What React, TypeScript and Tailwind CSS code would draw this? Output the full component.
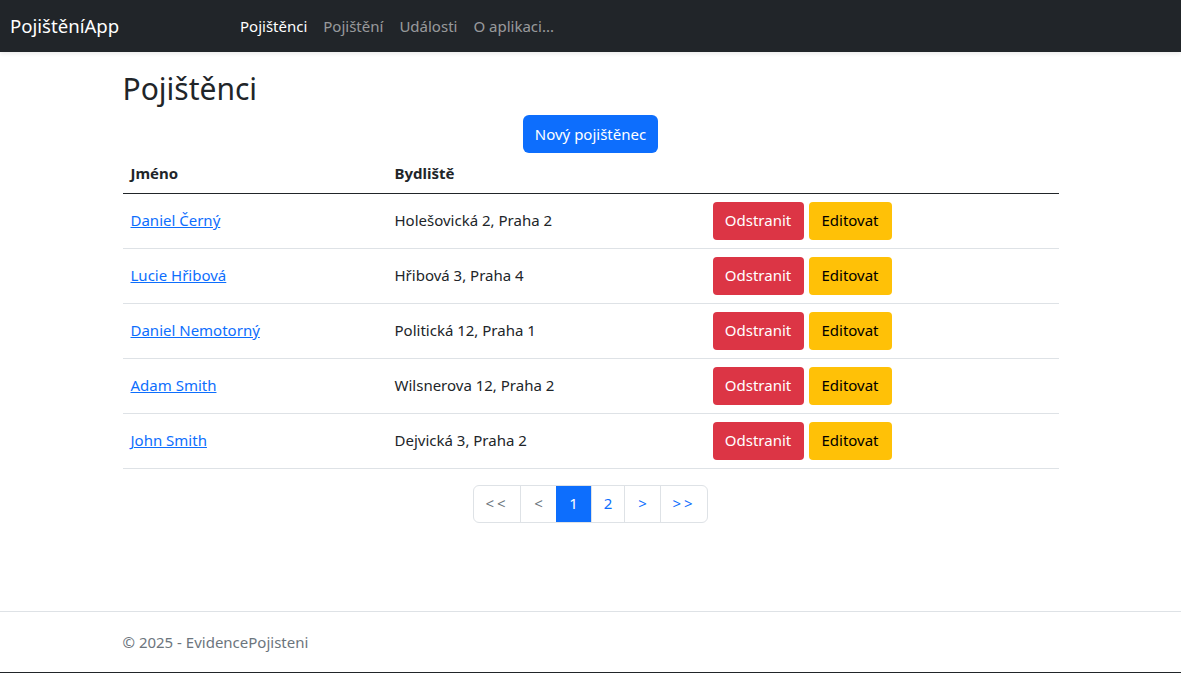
import React from "react";

const people = [
  { name: "Daniel Černý", address: "Holešovická 2, Praha 2" },
  { name: "Lucie Hřibová", address: "Hřibová 3, Praha 4" },
  { name: "Daniel Nemotorný", address: "Politická 12, Praha 1" },
  { name: "Adam Smith", address: "Wilsnerova 12, Praha 2" },
  { name: "John Smith", address: "Dejvická 3, Praha 2" },
];

const font = { fontFamily: '"Noto Sans", "Open Sans", sans-serif' };

export default function App() {
  return (
    <div className="min-h-[673px] flex flex-col bg-white text-[#212529] text-[15px] border-b border-[#212529]" style={font}>
      {/* Navbar */}
      <nav className="h-[52px] bg-[#212529] flex items-center shadow-[0_2px_4px_rgba(0,0,0,0.08)]">
        <a className="pl-[10px] w-[240px] text-[18.6px] text-white">PojištěníApp</a>
        <ul className="flex items-center gap-[16px]">
          <li className="text-white">Pojištěnci</li>
          <li className="text-[#ffffff8c]">Pojištění</li>
          <li className="text-[#ffffff8c]">Události</li>
          <li className="text-[#ffffff8c]">O aplikaci...</li>
        </ul>
      </nav>

      {/* Main */}
      <main className="flex-1 w-[936px] mx-auto pt-[19px]">
        <h2 className="text-[30px] leading-[36px] font-normal mb-[8px]">Pojištěnci</h2>
        <div className="flex justify-center">
          <button className="h-[38px] px-[12px] rounded-[6px] bg-[#0d6efd] text-white">Nový pojištěnec</button>
        </div>

        <table className="w-full border-collapse">
          <thead>
            <tr className="border-b border-[#212529]">
              <th className="w-[264px] text-left font-bold px-[8px] h-[40px]">Jméno</th>
              <th className="w-[318px] text-left font-bold px-[8px]">Bydliště</th>
              <th className="px-[8px]"></th>
            </tr>
          </thead>
          <tbody>
            {people.map((p) => (
              <tr key={p.name} className="border-b border-[#dee2e6]">
                <td className="px-[8px] h-[55px]">
                  <a className="text-[#0d6efd] underline">{p.name}</a>
                </td>
                <td className="px-[8px]">{p.address}</td>
                <td className="px-[8px]">
                  <div className="flex gap-[5px]">
                    <button className="h-[38px] w-[91px] rounded-[4px] bg-[#dc3545] text-white">Odstranit</button>
                    <button className="h-[38px] w-[83px] rounded-[4px] bg-[#ffc107] text-black">Editovat</button>
                  </div>
                </td>
              </tr>
            ))}
          </tbody>
        </table>

        {/* Pagination */}
        <div className="flex justify-center mt-[16px]">
          <ul className="flex h-[38px] border border-[#dee2e6] rounded-[6px] overflow-hidden">
            <li className="w-[46px] flex items-center justify-center text-[#6c757d] tracking-[3px]">&lt;&lt;</li>
            <li className="w-[36px] flex items-center justify-center text-[#6c757d] border-l border-[#dee2e6]">&lt;</li>
            <li className="w-[35px] flex items-center justify-center bg-[#0d6efd] text-white">1</li>
            <li className="w-[33px] flex items-center justify-center text-[#0d6efd] border-l border-[#dee2e6]">2</li>
            <li className="w-[36px] flex items-center justify-center text-[#0d6efd] border-l border-[#dee2e6]">&gt;</li>
            <li className="w-[47px] flex items-center justify-center text-[#0d6efd] border-l border-[#dee2e6] tracking-[3px]">&gt;&gt;</li>
          </ul>
        </div>
      </main>

      {/* Footer */}
      <footer className="h-[61px] border-t border-[#dee2e6] flex items-center">
        <div className="w-[936px] mx-auto text-[#6c757d]">© 2025 - EvidencePojisteni</div>
      </footer>
    </div>
  );
}
